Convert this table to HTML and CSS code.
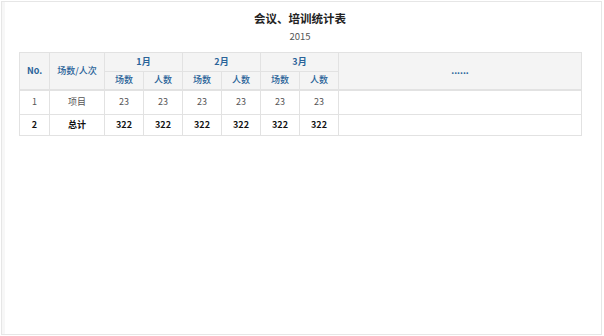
FILE: index.html
```html
<!DOCTYPE html>
<html lang="zh">
<head>
<meta charset="utf-8">
<title>会议、培训统计表</title>
<link rel="stylesheet" href="styles.css">
</head>
<body>
<div class="page">
  <h1 class="title">会议、培训统计表</h1>
  <div class="year">2015</div>
  <table class="stats">
    <colgroup>
      <col class="c-no"><col class="c-type">
      <col class="c-sub"><col class="c-sub">
      <col class="c-sub"><col class="c-sub">
      <col class="c-sub"><col class="c-sub">
      <col class="c-more">
    </colgroup>
    <thead>
      <tr class="h1">
        <th rowspan="2" class="strong">No.</th>
        <th rowspan="2" class="medium">场数/人次</th>
        <th colspan="2" class="strong">1月</th>
        <th colspan="2" class="strong">2月</th>
        <th colspan="2" class="strong">3月</th>
        <th rowspan="2" class="strong">......</th>
      </tr>
      <tr class="h2">
        <th class="medium">场数</th><th class="medium">人数</th>
        <th class="medium">场数</th><th class="medium">人数</th>
        <th class="medium">场数</th><th class="medium">人数</th>
      </tr>
    </thead>
    <tbody>
      <tr class="r1">
        <td>1</td><td>项目</td>
        <td>23</td><td>23</td><td>23</td><td>23</td><td>23</td><td>23</td><td></td>
      </tr>
      <tr class="r2 total">
        <td>2</td><td>总计</td>
        <td>322</td><td>322</td><td>322</td><td>322</td><td>322</td><td>322</td><td></td>
      </tr>
    </tbody>
  </table>
</div>
</body>
</html>
```
FILE: styles.css
```css
html, body {
  margin: 0;
  padding: 0;
  background: #ffffff;
}
body {
  font-family: "Noto Sans CJK SC", "Noto Sans", "Liberation Sans", sans-serif;
  color: #444;
}
.page {
  box-sizing: border-box;
  margin: 1px 2px 0 1px;
  height: 334px;
  border: 1px solid #e6e6e6;
  box-shadow: inset 3px 0 0 #f7f7f7;
  padding: 8px 20px 0 17px;
}
.title {
  margin: 0;
  text-align: center;
  font-size: 11.5px;
  line-height: 16px;
  font-weight: bold;
  color: #222;
}
.year {
  margin-top: 3px;
  text-align: center;
  font-size: 9.5px;
  line-height: 14px;
  color: #555;
}
.stats {
  margin-top: 9px;
  width: 563px;
  table-layout: fixed;
  border-collapse: collapse;
  border: 1px solid #dcdcdc;
  font-size: 9px;
}
.c-no { width: 30px; }
.c-type { width: 55px; }
.c-sub { width: 39px; }
.c-more { width: auto; }
.stats th, .stats td {
  border: 1px solid #e2e2e2;
  text-align: center;
  padding: 0;
  line-height: 12px;
}
.stats th {
  background: #f4f4f4;
  color: #2a6399;
  font-weight: normal;
}
.stats th.strong {
  font-weight: bold;
}
.stats th.medium {
  font-weight: 500;
}
.stats thead {
  border-bottom: 2px solid #e2e2e2;
}
.h1 { height: 19px; }
.h2 { height: 18px; }
.r1 { height: 25px; }
.r1 td { color: #555; }
.r2 { height: 21px; }
.total td {
  font-weight: bold;
  color: #111;
}
```
